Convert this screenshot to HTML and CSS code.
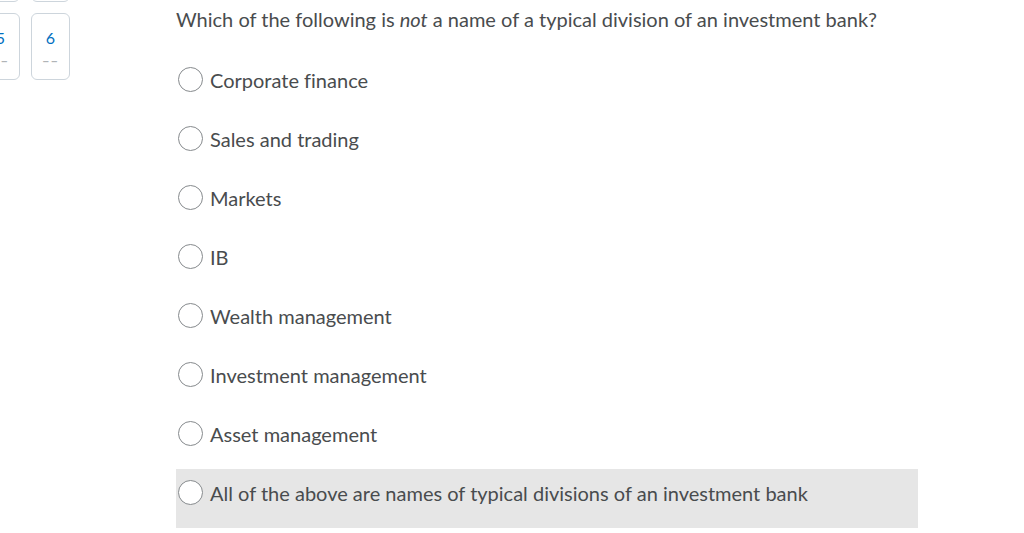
FILE: index.html
```html
<!DOCTYPE html>
<html lang="en">
<head>
    <meta charset="UTF-8">
    <meta name="viewport" content="width=device-width, initial-scale=1.0">
    <title>Quiz Question</title>
    <link rel="stylesheet" href="styles.css">
</head>
<body>
    <div class="page">
        <div class="question-nav">
            <div class="q-box"></div>
            <div class="q-box"></div>
            <div class="q-box"><span class="q-num">5</span><span class="q-dash">––</span></div>
            <div class="q-box"><span class="q-num">6</span><span class="q-dash">––</span></div>
        </div>

        <div class="question">
            <p class="question-text">Which of the following is <em>not</em> a name of a typical division of an investment bank?</p>
            <div class="options">
                <label class="option"><span class="radio"></span>Corporate finance</label>
                <label class="option"><span class="radio"></span>Sales and trading</label>
                <label class="option"><span class="radio"></span>Markets</label>
                <label class="option"><span class="radio"></span>IB</label>
                <label class="option"><span class="radio"></span>Wealth management</label>
                <label class="option"><span class="radio"></span>Investment management</label>
                <label class="option"><span class="radio"></span>Asset management</label>
                <label class="option option-hover"><span class="radio"></span>All of the above are names of typical divisions of an investment bank</label>
            </div>
        </div>
    </div>
</body>
</html>
```

FILE: styles.css
```css
body {
    font-family: 'Lato', sans-serif;
    font-variant-ligatures: none;
    margin: 0;
    padding: 0;
    background-color: #fff;
    color: #494c4e;
    overflow: hidden;
}

.page {
    display: flex;
    align-items: flex-start;
}

.question-nav {
    display: grid;
    grid-template-columns: 39px 39px;
    column-gap: 11px;
    row-gap: 11px;
    margin-left: -19px;
    margin-top: -65px;
}

.q-box {
    box-sizing: border-box;
    height: 67px;
    border: 1px solid #cdd5dc;
    border-radius: 6px;
    display: flex;
    flex-direction: column;
    align-items: center;
    padding-top: 15px;
}

.q-num {
    color: #006fbf;
    font-size: 16px;
    line-height: 18px;
}

.q-dash {
    color: #b0b4b7;
    font-size: 13px;
    font-weight: bold;
    letter-spacing: 1px;
    line-height: 18px;
    margin-top: 5px;
}

.question {
    margin-left: 106px;
    width: 742px;
}

.question-text {
    font-size: 20px;
    line-height: 24px;
    margin: 7px 0 0 0;
}

.options {
    margin-top: 25px;
}

.option {
    display: flex;
    align-items: center;
    height: 59px;
    box-sizing: border-box;
    padding: 0 0 12px 2px;
    font-size: 20px;
}

.option-hover {
    background-color: #e6e6e6;
}

.radio {
    box-sizing: border-box;
    width: 25px;
    height: 25px;
    border: 1px solid #868a8d;
    border-radius: 50%;
    background-color: #fff;
    margin-right: 7px;
    flex-shrink: 0;
}
```
